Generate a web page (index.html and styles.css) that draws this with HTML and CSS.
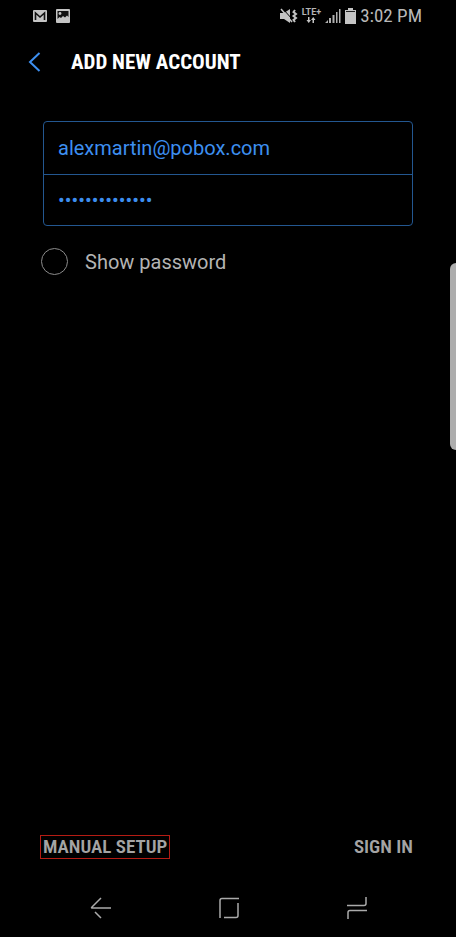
FILE: index.html
```html
<!DOCTYPE html>
<html lang="en">
<head>
<meta charset="utf-8">
<meta name="viewport" content="width=device-width, initial-scale=1">
<title>Add new account</title>
<link rel="stylesheet" href="styles.css">
</head>
<body>
<div class="status-bar">
  <div class="notifications">
    <svg width="16" height="14" viewBox="0 0 16 14" aria-hidden="true">
      <rect x="1" y="1" width="14" height="12" rx="1" fill="#c4c4c4"/>
      <path d="M3.500 11V4L8 8l4.500-4v7" fill="none" stroke="#111" stroke-width="1.600"/>
    </svg>
    <svg width="16" height="16" viewBox="0 0 16 16" aria-hidden="true">
      <rect x="1" y="1" width="14" height="14" rx="1" fill="#c4c4c4"/>
      <path d="M2.500 3h11v6l-1.500-1.500-2 2L8 8l-2 2-1.500-1L2.500 11z" fill="#111"/>
      <circle cx="5" cy="5.500" r="1.400" fill="#c4c4c4"/>
    </svg>
  </div>
  <div class="system">
    <svg width="18" height="16" viewBox="0 0 18 16" aria-hidden="true">
      <path d="M0 5h4l6-4v14l-6-4H0z" fill="#c4c4c4"/>
      <path d="M3 1l10 11" stroke="#000"/>
      <path d="M1 1l11 13" stroke="#c4c4c4" stroke-width="1.500"/>
      <path d="M15 2l-1.500 2L16 6l-2.500 2L16 10l-2.500 2L15 14" fill="none" stroke="#c4c4c4" stroke-width="2"/>
    </svg>
    <span class="network">
      <span>LTE+</span>
      <svg width="10" height="6" viewBox="0 0 10 6" aria-hidden="true">
        <path d="M2 0h1.500v3H5L2.750 6 .500 3H2zM6.500 6H8V3h1.500L7.250 0 5 3h1.500z" fill="#c4c4c4"/>
      </svg>
    </span>
    <svg width="16" height="16" viewBox="0 0 16 16" aria-hidden="true">
      <path d="M0 15l3-3v3zM4 10h2v5H4zM7.500 7h2v8h-2zM11 4h1.500v11H11zM14 1h1.500v14H14z" fill="#b0b0b0"/>
    </svg>
    <svg width="11" height="16" viewBox="0 0 11 16" aria-hidden="true">
      <path d="M3 0h5v2h3v14H0V2h3z" fill="#c4c4c4"/>
      <path d="M1 3.500h9" stroke="#222"/>
    </svg>
    <time class="clock">3:02 PM</time>
  </div>
</div>

<header class="app-bar">
  <button class="icon-button" type="button" aria-label="Back">
    <svg width="13" height="20" viewBox="0 0 13 20" aria-hidden="true">
      <path d="M11.500 1L2 10l9.500 9" fill="none" stroke="#3d8ff0" stroke-width="2"/>
    </svg>
  </button>
  <h1>ADD NEW ACCOUNT</h1>
</header>

<form class="account-form" id="account">
  <div class="fields">
    <input type="email" aria-label="Email address" value="alexmartin@pobox.com">
    <input type="password" aria-label="Password" value="abcdefghijklmn">
  </div>
  <label class="show-password"><input type="checkbox">Show password</label>
</form>

<div class="actions">
  <button class="manual" type="button">MANUAL SETUP</button>
  <button type="submit" form="account">SIGN IN</button>
</div>

<nav class="nav-bar" aria-label="System">
  <button class="icon-button" type="button" aria-label="Back">
    <svg width="22" height="24" viewBox="0 0 22 24" aria-hidden="true">
      <path d="M11 2L2 11q-1 1 0 1H21M5 16l6 6" fill="none" stroke="#aaa" stroke-width="1.500"/>
    </svg>
  </button>
  <button class="icon-button" type="button" aria-label="Home">
    <svg width="22" height="24" viewBox="0 0 22 24" aria-hidden="true">
      <path d="M2 22V4.500Q2 2.500 4 2.500H21M20 7V19.500Q20 21.500 18 21.500H6" fill="none" stroke="#aaa" stroke-width="1.500"/>
    </svg>
  </button>
  <button class="icon-button" type="button" aria-label="Recent apps">
    <svg width="22" height="24" viewBox="0 0 22 24" aria-hidden="true">
      <path d="M20 1V7.500Q20 9.500 18 9.500H1M2 23V16.500Q2 14.500 4 14.500H21" fill="none" stroke="#aaa" stroke-width="1.500"/>
    </svg>
  </button>
</nav>
<div class="edge-handle"></div>
</body>
</html>
```
FILE: styles.css
```css
* { box-sizing: border-box; }

body {
  position: relative;
  display: flex;
  flex-direction: column;
  min-height: 100vh;
  margin: 0;
  overflow-x: hidden;
  background: #000;
  color: #b4b4b4;
  font-family: Roboto, sans-serif;
  font-size: 20px;
}

svg { display: block; }

button {
  padding: 0;
  border: 0;
  background: none;
  color: #a4a4a4;
  font: 600 19px/22px "Roboto Condensed", Roboto, sans-serif;
}

.status-bar,
.notifications,
.system {
  display: flex;
  align-items: center;
}

.status-bar {
  justify-content: space-between;
  height: 31px;
  padding: 0 34px 0 32px;
}

.notifications { gap: 7px; }
.system { gap: 4px; }

.network {
  display: flex;
  flex-direction: column;
  align-items: center;
  gap: 1px;
  font: bold 9px/8px Roboto, sans-serif;
}

.clock {
  color: #b8b8b8;
  font: 19px/24px "Roboto Condensed", Roboto, sans-serif;
}

.app-bar {
  display: flex;
  align-items: center;
  gap: 30px;
  height: 62px;
  padding: 0 28px;
}

h1 {
  margin: 0;
  color: #fff;
  font: bold 21px/28px "Roboto Condensed", Roboto, sans-serif;
}

.account-form {
  flex: 1;
  padding: 28px 43px;
}

.fields {
  border: 1px solid #235790;
  border-radius: 4px;
}

.fields input {
  display: block;
  width: 100%;
  height: 52px;
  padding: 0 14px;
  border: 0;
  outline: 0;
  background: transparent;
  color: #3d8ff0;
  font: 20px/24px Roboto, sans-serif;
}

.fields input + input {
  height: 51px;
  border-top: 1px solid #235790;
}

.show-password {
  display: inline-flex;
  align-items: center;
  gap: 17px;
  margin: 22px 0 0 -2px;
}

.show-password input {
  appearance: none;
  width: 27px;
  height: 27px;
  margin: 0;
  border: 1px solid #8c8c8c;
  border-radius: 50%;
}

.show-password input:checked { background: #3d8ff0; }

.actions {
  display: flex;
  justify-content: space-between;
  align-items: center;
  padding: 0 43px 0 40px;
}

.actions .manual {
  padding: 0 2px;
  border: 1px solid #b51c14;
}

.nav-bar {
  display: flex;
  justify-content: space-between;
  align-items: center;
  height: 78px;
  padding: 20px 88px 0 90px;
}

.edge-handle {
  position: absolute;
  top: 263px;
  right: 0;
  width: 6px;
  height: 187px;
  border-radius: 6px 0 0 6px;
  background: #adadad;
}
```
